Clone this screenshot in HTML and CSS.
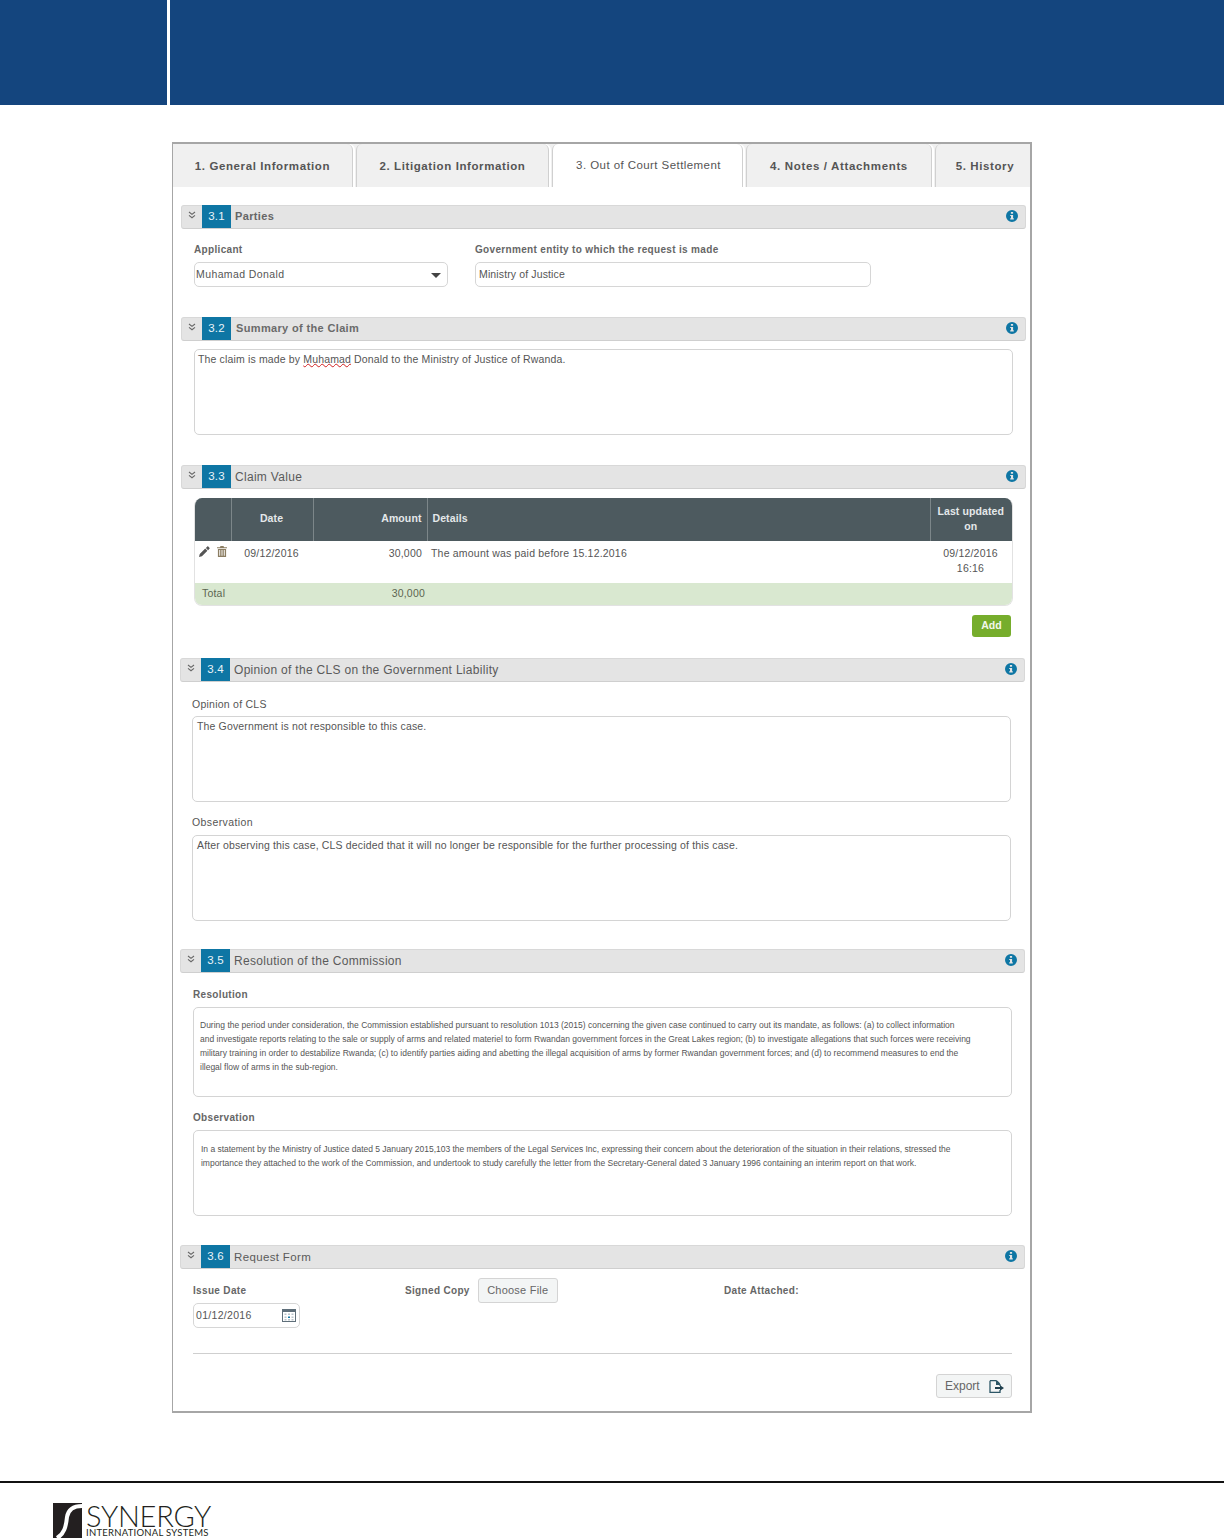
FILE: index.html
```html
<!DOCTYPE html>
<html lang="en">
<head>
<meta charset="utf-8">
<title>Out of Court Settlement</title>
<link rel="stylesheet" href="styles.css">
</head>
<body>
<svg class="defs" width="0" height="0" aria-hidden="true">
  <symbol id="chev" viewBox="0 0 8 8"><path d="M1 1l3 2.4L7 1M1 4.4l3 2.4 3-2.4" fill="none" stroke="#666" stroke-width="1.1"/></symbol>
  <symbol id="info" viewBox="0 0 12 12"><path fill-rule="evenodd" fill="#0e76a4" d="M6 0a6 6 0 1 1 0 12A6 6 0 0 1 6 0zM4.900 1.900v1.900h2.200V1.900zM4.200 5v1.100h.8v2.200h-.8v1.200h3.600V8.300h-.7V5z"/></symbol>
</svg>
<header class="banner"><div class="banner-side"></div><div class="banner-main"></div></header>

<main class="card">
  <nav class="tabs">
    <div class="tab t1">1. General Information</div>
    <div class="tab t2">2. Litigation Information</div>
    <div class="tab t3 active">3. Out of Court Settlement</div>
    <div class="tab t4">4. Notes / Attachments</div>
    <div class="tab t5">5. History</div>
  </nav>

  <section class="sec s1">
    <div class="sec-head"><svg class="chev"><use href="#chev"/></svg><span class="num">3.1</span><span class="title small">Parties</span><svg class="info"><use href="#info"/></svg></div>
    <div class="parties">
      <div class="field">
        <label class="lbl">Applicant</label>
        <div class="ctl sel">Muhamad Donald<span class="caret"></span></div>
      </div>
      <div class="field">
        <label class="lbl">Government entity to which the request is made</label>
        <div class="ctl txt">Ministry of Justice</div>
      </div>
    </div>
  </section>

  <section class="sec s2">
    <div class="sec-head"><svg class="chev"><use href="#chev"/></svg><span class="num">3.2</span><span class="title mid">Summary of the Claim</span><svg class="info"><use href="#info"/></svg></div>
    <div class="area a-summary">The claim is made by <span class="spell">Muhamad</span> Donald to the Ministry of Justice of Rwanda.</div>
  </section>

  <section class="sec s3">
    <div class="sec-head"><svg class="chev"><use href="#chev"/></svg><span class="num">3.3</span><span class="title">Claim Value</span><svg class="info"><use href="#info"/></svg></div>
    <div class="tbl-wrap">
      <table class="tbl">
        <colgroup><col class="c1"><col class="c2"><col class="c3"><col class="c4"><col class="c5"></colgroup>
        <thead><tr><th></th><th class="ctr">Date</th><th class="rgt">Amount</th><th class="lft">Details</th><th class="ctr">Last updated on</th></tr></thead>
        <tbody>
          <tr class="row">
            <td class="acts">
              <svg class="ic-pen" viewBox="0 0 12 12"><path fill="#555" d="M0 12l.8-3.200 6-6L9.200 5.200l-6 6zM7.500 2.100L9 .6a.8.8 0 0 1 1.100 0l1.300 1.300a.8.8 0 0 1 0 1.100L9.900 4.500z"/></svg>
              <svg class="ic-bin" viewBox="0 0 11 12"><path fill="#8b7d62" d="M3.800 0h3.400l.5 1.200H11v1.100H0V1.200h3.300zM1 3.200h9V12H1zm1.500 1.200v6.400h1V4.400zm2.500 0v6.400h1V4.400zm2.500 0v6.400h1V4.400z"/></svg>
            </td>
            <td class="ctr">09/12/2016</td>
            <td class="rgt">30,000</td>
            <td class="lft">The amount was paid before 15.12.2016</td>
            <td class="ctr">09/12/2016<br>16:16</td>
          </tr>
          <tr class="total">
            <td colspan="2">Total</td>
            <td class="rgt">30,000</td>
            <td colspan="2"></td>
          </tr>
        </tbody>
      </table>
    </div>
    <div class="add-row"><button class="add" type="button">Add</button></div>
  </section>

  <section class="sec s4 shift">
    <div class="sec-head"><svg class="chev"><use href="#chev"/></svg><span class="num">3.4</span><span class="title">Opinion of the CLS on the Government Liability</span><svg class="info"><use href="#info"/></svg></div>
    <label class="lbl first">Opinion of CLS</label>
    <div class="area a-op">The Government is not responsible to this case.</div>
    <label class="lbl next">Observation</label>
    <div class="area a-op">After observing this case, CLS decided that it will no longer be responsible for the further processing of this case.</div>
  </section>

  <section class="sec s5 shift">
    <div class="sec-head"><svg class="chev"><use href="#chev"/></svg><span class="num">3.5</span><span class="title">Resolution of the Commission</span><svg class="info"><use href="#info"/></svg></div>
    <label class="lbl first res">Resolution</label>
    <div class="area a-res">
      <p>During the period under consideration, the Commission established pursuant to resolution 1013 (2015) concerning the given case continued to carry out its mandate, as follows: (a) to collect information</p>
      <p>and investigate reports relating to the sale or supply of arms and related materiel to form Rwandan government forces in the Great Lakes region; (b) to investigate allegations that such forces were receiving</p>
      <p>military training in order to destabilize Rwanda; (c) to identify parties aiding and abetting the illegal acquisition of arms by former Rwandan government forces; and (d) to recommend measures to end the</p>
      <p>illegal flow of arms in the sub-region.</p>
    </div>
    <label class="lbl next res">Observation</label>
    <div class="area a-res a-obs">
      <p>In a statement by the Ministry of Justice dated 5 January 2015,103 the members of the Legal Services Inc, expressing their concern about the deterioration of the situation in their relations, stressed the</p>
      <p>importance they attached to the work of the Commission, and undertook to study carefully the letter from the Secretary-General dated 3 January 1996 containing an interim report on that work.</p>
    </div>
  </section>

  <section class="sec s6 shift">
    <div class="sec-head"><svg class="chev"><use href="#chev"/></svg><span class="num">3.6</span><span class="title req-title">Request Form</span><svg class="info"><use href="#info"/></svg></div>
    <div class="req">
      <div class="req-date">
        <label class="lbl">Issue Date</label>
        <div class="ctl date">01/12/2016
          <svg class="ic-cal" viewBox="0 0 14 13"><path fill="#5f6f7a" d="M0 0h14v13H0z"/><path fill="#fff" d="M1 3h12v9H1z"/><path fill="#b9c3ca" d="M2.500 4.500h2v1.500h-2zM6 4.500h2v1.500H6zm3.500 0h2v1.500h-2zM2.500 7.500h2V9h-2zm0 2.500h2v1.500h-2zM9.500 7.500h2V9h-2zm0 2.500h2v1.500h-2zM6 10h2v1.500H6z"/><path fill="#0e76a4" d="M6 7.500h2V9H6z"/></svg>
        </div>
      </div>
      <div class="req-file"><label class="lbl">Signed Copy</label><button class="choose" type="button">Choose File</button></div>
      <div class="req-att"><label class="lbl">Date Attached:</label></div>
    </div>
    <hr class="rule">
    <div class="export-row">
      <button class="export" type="button">Export
        <svg class="ic-exp" viewBox="0 0 15 13"><path fill="none" stroke="#2c5666" stroke-width="1.300" d="M1 .7h6l4 4V6M11 10v2.300H1V.7"/><path fill="#2c5666" d="M7 .7h1.500L11 3.200V5H7z"/><path fill="#1f3f4d" d="M6 7h5V5.300L15 8l-4 2.700V9H6z"/></svg>
      </button>
    </div>
  </section>
</main>

<footer class="foot">
  <div class="logo">
    <svg class="logo-mark" viewBox="0 0 29 35"><path fill="#231f20" d="M0 0h29v35H0z"/><path fill="none" stroke="#fff" stroke-width="4" d="M29 3C19 3 15 8 14 14c-1 10-3 17-10 21"/></svg>
    <div class="logo-text"><span class="logo-big">SYNERGY</span><span class="logo-small">INTERNATIONAL SYSTEMS</span></div>
  </div>
</footer>
</body>
</html>
```
FILE: styles.css
```css
* { box-sizing: border-box; }
html, body { margin: 0; padding: 0; }
body {
  width: 1224px;
  height: 1538px;
  overflow: hidden;
  background: #fff;
  font-family: "Liberation Sans", Arial, sans-serif;
  font-size: 11px;
  color: #555;
  letter-spacing: .2px;
}
.defs { position: absolute; }

/* banner */
.banner { display: flex; height: 105px; gap: 3px; }
.banner-side { width: 167px; background: #14457e; }
.banner-main { flex: 1; background: #14457e; }

/* card */
.card {
  width: 860px;
  height: 1271px;
  margin: 37px 0 0 172px;
  border: 2px solid #a6a6a6;
  border-left-width: 1px;
}

/* tabs */
.tabs { display: flex; height: 43px; background: #f0f0f0; font-weight: bold; font-size: 11.500px; letter-spacing: .6px; color: #555; }
.tab {
  display: flex;
  align-items: center;
  justify-content: center;
  height: 43px;
  border: 1px solid #d0d0d0;
  border-bottom: 0;
  border-left: 0;
  border-top: 0;
  border-radius: 0 6px 0 0;
  box-shadow: 1px 0 0 #fff, 2px 0 0 #fff;
  margin-right: 3px;
  background: #f0f0f0;
}
.t1 { width: 180px; }
.t2 { width: 193px; border-left: 1px solid #d0d0d0; border-radius: 6px 6px 0 0; }
.t3 { width: 191px; border-left: 1px solid #d0d0d0; border-radius: 6px 6px 0 0; }
.t4 { width: 186px; border-left: 1px solid #d0d0d0; border-radius: 6px 6px 0 0; letter-spacing: .65px; }
.t5 { width: 95px; padding-left: 4px; border-left: 1px solid #d0d0d0; border-right: 0; border-radius: 6px 0 0 0; margin-right: 0; box-shadow: none; }
.tab.active { background: #fff; font-weight: normal; letter-spacing: .43px; padding: 0 0 2px 2px; }

/* section */
.sec { margin-left: 8px; width: 845px; }
.sec.shift { margin-left: 7px; }
.s1 { margin-top: 18px; height: 112px; }
.s2 { height: 148px; }
.s3 { height: 193px; }
.s4 { height: 291px; }
.s5 { height: 296px; }

.sec-head {
  display: flex;
  align-items: center;
  height: 24px;
  background: #e4e4e4;
  border: 1px solid #d8d8d8;
  border-bottom: 1px solid #cfcfcf;
  border-radius: 3px;
}
.chev { width: 8px; height: 8px; margin: -5px 0 0 6px; flex: none; }
.num {
  width: 29px;
  height: 23px;
  margin: -1px 0 0 6px;
  padding-bottom: 2px;
  flex: none;
  background: #0e76a4;
  color: #eaf4f8;
  display: flex;
  align-items: center;
  justify-content: center;
  font-size: 11.500px;
  letter-spacing: .1px;
}
.title { margin-left: 4px; font-size: 12px; color: #5a5a5a; letter-spacing: .3px; }
.title.small { padding-bottom: 2px; font-size: 11px; font-weight: bold; color: #666; letter-spacing: .35px; }
.title.mid { margin-left: 5px; padding-bottom: 2px; font-size: 11px; font-weight: bold; color: #6a6a6a; letter-spacing: .35px; }
.title.req-title { font-size: 11.500px; letter-spacing: .35px; }
.info { width: 12px; height: 12px; margin: -2px 7px 0 auto; flex: none; }

/* form */
.lbl { display: block; font-size: 10px; font-weight: bold; color: #666; line-height: 14px; letter-spacing: .33px; }
.parties { display: flex; padding: 14px 0 0 13px; gap: 27px; }
.field .lbl { margin-bottom: 5px; }
.ctl {
  height: 25px;
  border: 1px solid #d6d6d6;
  border-radius: 5px;
  display: flex;
  align-items: center;
  padding: 0 0 2px 1px;
  font-size: 10.500px;
  letter-spacing: .1px;
  position: relative;
}
.sel { width: 254px; letter-spacing: .4px; }
.txt { width: 396px; padding-left: 3px; letter-spacing: .13px; }
.caret { position: absolute; right: 6px; top: 10px; border: 5px solid transparent; border-top-color: #444; border-bottom: 0; }

.area {
  border: 1px solid #d4d4d4;
  border-radius: 5px;
  height: 86px;
  background: #fff;
  font-size: 10.500px;
  line-height: 14px;
  padding: 2px 3px;
  letter-spacing: .15px;
}
.a-summary { width: 819px; margin: 8px 0 0 13px; }
.spell { text-decoration: underline wavy #d02020 1px; text-underline-offset: 0; }

/* table */
.tbl-wrap { width: 819px; margin: 9px 0 0 13px; border: 1px solid #e2e2e2; border-top: 0; border-radius: 8px; overflow: hidden; }
.tbl { width: 100%; border-collapse: collapse; table-layout: fixed; font-size: 10.500px; }
.c1 { width: 36px; } .c2 { width: 82px; } .c3 { width: 114px; } .c4 { width: 503px; } .c5 { width: 82px; }
.tbl th {
  height: 43px;
  background: #4d5a5f;
  color: #e4e8ea;
  font-size: 10.500px;
  font-weight: bold;
  line-height: 15px;
  padding: 0 5px 2px 4px;
  border-right: 1px solid #7c8689;
  letter-spacing: .1px;
}
.tbl th.lft { padding-left: 5px; }
.tbl th:last-child { border-right: 0; }
.ctr { text-align: center; }
.rgt { text-align: right; }
.lft { text-align: left; }
.row td { height: 42px; vertical-align: top; padding: 5px 5px 0 4px; line-height: 15px; }
.row .acts { padding: 5px 0 0 4px; white-space: nowrap; }
.ic-pen { width: 11px; height: 11px; }
.ic-bin { width: 10px; height: 11px; margin-left: 4px; }
.total td { height: 22px; background: #d9e8d0; padding: 0 2px 2px 7px; color: #5c6650; }
.add-row { display: flex; justify-content: flex-end; width: 830px; margin-top: 9px; }
.add { width: 39px; height: 22px; border: 0; border-radius: 3px; background: #76ad2c; color: #f2f7ea; font: bold 10.500px "Liberation Sans", Arial, sans-serif; padding: 0 0 2px; }

/* opinion */
.lbl.first { margin: 15px 0 5px 12px; font-weight: normal; font-size: 10.500px; letter-spacing: .25px; color: #555; }
.lbl.next { margin: 13px 0 6px 12px; font-size: 10.500px; font-weight: normal; letter-spacing: .4px; color: #555; }
.lbl.res { margin-left: 13px; font-size: 10px; font-weight: bold; color: #666; letter-spacing: .33px; }
.lbl.first.res { margin-top: 15px; margin-bottom: 5px; }
.lbl.next.res { margin-top: 14px; margin-bottom: 5px; }
.a-op { width: 819px; margin-left: 12px; padding: 2px 4px; }
.a-res { width: 819px; height: 90px; margin-left: 13px; padding: 10px 6px; font-size: 8.500px; letter-spacing: 0; }
.a-res p { margin: 0; white-space: nowrap; }
.a-obs { height: 86px; padding: 11px 7px; letter-spacing: -.02px; }

/* request */
.req { display: flex; height: 59px; margin-left: 13px; }
.req-date { width: 212px; padding-top: 15px; }
.req-date .lbl { margin-bottom: 5px; }
.date { width: 107px; padding-left: 2px; letter-spacing: .3px; }
.ic-cal { position: absolute; width: 14px; height: 13px; right: 3px; top: 5px; }
.req-file { width: 319px; display: flex; align-items: flex-start; gap: 8px; padding-top: 9px; }
.req-file .lbl { padding-top: 6px; }
.req-att { padding-top: 15px; }
.choose {
  width: 80px;
  height: 25px;
  border: 1px solid #d4d4d4;
  border-radius: 3px;
  background: #f3f5f5;
  color: #666;
  font: 11px "Liberation Sans", Arial, sans-serif;
  letter-spacing: .22px;
  padding: 0 0 2px;
}
.rule { width: 819px; margin: 25px 0 0 13px; border: 0; border-top: 1px solid #cfcfcf; }
.export-row { display: flex; justify-content: flex-end; width: 832px; margin-top: 20px; }
.export {
  width: 76px;
  height: 24px;
  border: 1px solid #d4d4d4;
  border-radius: 3px;
  background: #f3f5f5;
  color: #666;
  font: 12px "Liberation Sans", Arial, sans-serif;
  display: flex;
  align-items: center;
  gap: 9px;
  padding: 0 0 0 8px;
}
.ic-exp { width: 15px; height: 13px; }

/* footer */
.foot { margin-top: 68px; border-top: 2px solid #111; height: 60px; padding: 20px 0 0 53px; overflow: hidden; }
.logo { display: flex; gap: 4px; height: 35px; }
.logo-mark { width: 29px; height: 35px; flex: none; }
.logo-text { display: flex; flex-direction: column; color: #231f20; letter-spacing: 0; }
.logo-big { font: 300 29px/25px "Lato", sans-serif; letter-spacing: -.25px; }
.logo-small { font: 9.500px/10px "Lato", sans-serif; letter-spacing: .25px; }
```
